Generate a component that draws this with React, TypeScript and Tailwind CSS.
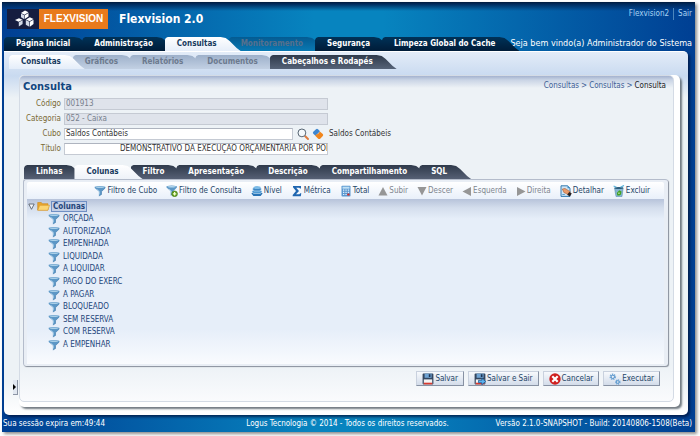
import React from 'react';
import clsx from 'clsx';

type Tab = { label: string; active?: boolean; disabled?: boolean };
type IconProps = { className?: string };

const MAIN_TABS: Tab[] = [
  { label: 'Página Inicial' },
  { label: 'Administração' },
  { label: 'Consultas', active: true },
  { label: 'Monitoramento', disabled: true },
  { label: 'Segurança' },
  { label: 'Limpeza Global do Cache' },
];

const SUB_TABS: Tab[] = [
  { label: 'Consultas', active: true },
  { label: 'Gráficos', disabled: true },
  { label: 'Relatórios', disabled: true },
  { label: 'Documentos', disabled: true },
  { label: 'Cabeçalhos e Rodapés' },
];

const QUERY_TABS: Tab[] = [
  { label: 'Linhas' },
  { label: 'Colunas', active: true },
  { label: 'Filtro' },
  { label: 'Apresentação' },
  { label: 'Descrição' },
  { label: 'Compartilhamento' },
  { label: 'SQL' },
];

const COLUMNS = [
  'ORÇADA',
  'AUTORIZADA',
  'EMPENHADA',
  'LIQUIDADA',
  'A LIQUIDAR',
  'PAGO DO EXERC',
  'A PAGAR',
  'BLOQUEADO',
  'SEM RESERVA',
  'COM RESERVA',
  'A EMPENHAR',
];

/* ---------- Icons ---------- */

function LogoIcon() {
  return (
    <svg viewBox="0 0 32 20" className="h-5 w-8">
      <g fill="#ffffff">
        <path d="M14 4l4-2.500 3.500 1.800-4 2.500z" />
        <path d="M14 4.500l3.300 1.700v4L14 8.300z" fill="#d5dbe8" />
        <path d="M17.800 6.200l3.700-2.300v3.500l-3.700 2.500z" />
        <path d="M8 11l4-1.800 3.600 1.600-4 2z" />
        <path d="M11.800 13.300l3.800-2v3.600l-3.800 2.600z" fill="#d5dbe8" />
        <path d="M19 10.500l3.800-2.200 3.700 1.700-3.900 2.200z" />
        <path d="M18.800 11l3.500 1.700v5l-3.500-2z" fill="#d5dbe8" />
        <path d="M22.900 12.700l3.600-2v4.200l-3.600 2.800z" />
      </g>
    </svg>
  );
}

function FunnelIcon({ className = 'h-3 w-3' }: IconProps) {
  return (
    <svg viewBox="0 0 12 12" className={className}>
      <path d="M.7 1.800Q6 0 11.300 1.800v1.100L7.500 6.600v2.900L4.900 11V6.600L.7 2.900z" fill="#5c97c6" />
      <ellipse cx="6" cy="2.200" rx="4.300" ry=".8" fill="#a9cfe8" />
      <path d="M3.300 4.200l2.200 2.200v3" fill="none" stroke="#a5cce7" strokeWidth=".8" />
      <path d="M11.300 2.900L7.500 6.600v2.900L4.900 11" fill="none" stroke="#3e78ab" strokeWidth=".6" />
    </svg>
  );
}

function FunnelAddIcon() {
  return (
    <svg viewBox="0 0 12 12" className="h-3 w-3">
      <path d="M.5 1.300Q5.600-.5 10.900 1.300v1.300L7.200 6.300v3L4.700 10.800V6.300L.5 2.600z" fill="#5c97c6" />
      <ellipse cx="5.700" cy="1.700" rx="4.300" ry=".8" fill="#b5d8ee" />
      <path d="M3 3.900l2.200 2.200v3" fill="none" stroke="#b5d8ee" strokeWidth=".8" />
      <circle cx="8.600" cy="8.800" r="2.900" fill="#5f9c18" stroke="#3e7010" strokeWidth=".5" />
      <path d="M8.600 7.100v3.400M6.900 8.800h3.400" stroke="#f4ffd0" strokeWidth="1.200" />
    </svg>
  );
}

function LevelIcon() {
  return (
    <svg viewBox="0 0 12 12" className="h-3 w-3">
      <path d="M.4 8.500l2-1.500h7.200l2 1.500-2 2.500H2.400z" fill="#2873b5" />
      <path d="M.8 6.500L2.600 5h6.800l1.800 1.500-1.800 2H2.600z" fill="#4f9ad4" stroke="#e7f3fb" strokeWidth=".5" />
      <path d="M1.400 4L3 2.500h6L10.600 4 9 6H3z" fill="#3b86c4" stroke="#e7f3fb" strokeWidth=".5" />
      <ellipse cx="6" cy="2.600" rx="3.600" ry="1.500" fill="#7dbbe6" />
    </svg>
  );
}

function SigmaIcon() {
  return (
    <svg viewBox="0 0 12 12" className="h-3 w-3">
      <path d="M2 1h8v2.500H9L8.200 2.700H5.200L8 6 5 9.300h3.400L9.300 8.300h1L9.800 11.200H1.700v-1.200L5 6 2 2.200z" fill="#1f66b0" />
    </svg>
  );
}

function CalculatorIcon() {
  return (
    <svg viewBox="0 0 12 12" className="h-3 w-3">
      <rect x="1.500" y=".8" width="9" height="10.700" rx=".8" fill="#5b98d0" />
      <rect x="2.500" y="1.700" width="7" height="2" fill="#bfe0f5" />
      <path d="M3 5.200h1.300M5.400 5.200h1.300M7.800 5.200h1.300M3 7.300h1.300M5.400 7.300h1.300M7.800 7.300h1.300M3 9.500h1.300M5.400 9.500h1.300" stroke="#e3f1fb" strokeWidth="1.200" />
      <rect x="7.300" y="8.600" width="2.200" height="1.900" fill="#e1261c" />
    </svg>
  );
}

function Arrow({ d }: { d: string }) {
  return (
    <svg viewBox="0 0 10 12" className="h-3 w-[10px]">
      <path d={d} fill="#969696" />
    </svg>
  );
}

function DetailIcon() {
  return (
    <svg viewBox="0 0 12 12" className="h-3 w-3">
      <path d="M1 .8h6.500L10 3.200v8.200H1z" fill="#cfe6f6" stroke="#1f6ea8" strokeWidth=".9" />
      <path d="M7.500.8v2.400H10z" fill="#3a8ac4" />
      <path d="M2.300 9.500h2.500" stroke="#3a8ac4" strokeWidth=".8" />
      <path d="M2.300 4l2.700-.6 5.300 3.400-1.900 2.800-4.500-2.100z" fill="#e89a6a" stroke="#a24c1f" strokeWidth=".5" />
      <path d="M9.200 7l2.600 1.500-2 3-2.600-1.700z" fill="#2a211f" />
    </svg>
  );
}

function TrashIcon() {
  return (
    <svg viewBox="0 0 12 12" className="h-3 w-3">
      <path d="M1.500 3h8.700L9 11.500H3z" fill="#86b5d2" stroke="#4b86ab" strokeWidth=".5" />
      <ellipse cx="5.900" cy="3" rx="4.400" ry="1" fill="#2c5d7c" />
      <path d="M.6 1l2.900 1.200M7.500 2.200l3.500-1.800" stroke="#5bb4dc" strokeWidth="1.200" />
      <path d="M6.200 5.200l2.300 1.300-.5 3-1.600 1H4.300L3.800 8z" fill="#43a321" />
      <path d="M5.700 7.300l1 .4-.3 1.300H5.300z" fill="#d8efd0" />
    </svg>
  );
}

function SearchIcon() {
  return (
    <svg viewBox="0 0 12 12" className="h-3 w-3">
      <path d="M8 8l3 3" stroke="#e07a3c" strokeWidth="1.900" strokeLinecap="round" />
      <circle cx="4.900" cy="4.900" r="3.900" fill="#f5f9fc" stroke="#566472" strokeWidth="1" />
    </svg>
  );
}

function EraserIcon() {
  return (
    <svg viewBox="0 0 12 12" className="h-3 w-3">
      <path d="M1.300 3.700L4 1.200q1-.8 2 0l2 2L3.500 7.800 1.300 5.800q-.9-1 0-2.100z" fill="#3f86cf" />
      <path d="M7.800 3.500L10.800 6q.9 1 0 2L8.200 10.700q-1 .8-2 0L3.200 7.800q.3-1.300 2-1.600t2.600-2.700z" fill="#f0851c" />
    </svg>
  );
}

function FolderIcon() {
  return (
    <svg viewBox="0 0 13 10" className="h-[10px] w-[13px]">
      <path d="M.7 9V1.500h3.600l1 1.200H11V9z" fill="#e8a52e" stroke="#c9841a" strokeWidth=".6" />
      <path d="M.7 9.300l2-5h9.800l-1.700 5z" fill="#fbd675" stroke="#d9982a" strokeWidth=".6" />
    </svg>
  );
}

function SaveIcon({ exit }: { exit?: boolean }) {
  return (
    <svg viewBox="0 0 12 12" className="h-3 w-3">
      <rect x=".6" y=".6" width="10.800" height="10.800" rx=".8" fill="#34465f" />
      <rect x="2.600" y=".6" width="7" height="4.200" fill="#6fa3d3" />
      <rect x="6.800" y="1.200" width="1.700" height="2.800" fill="#1e3554" />
      <rect x="1.800" y="6.400" width="8.400" height="5" fill="#f4f4f4" />
      <rect x="1.800" y="9.700" width="8.400" height="1.700" fill="#d93a30" />
      {exit && <path d="M4.500 7.300h3.300V5.300L11.700 8.500 7.800 11.700V9.700H4.500z" fill="#5db2ee" stroke="#12508e" strokeWidth=".7" />}
    </svg>
  );
}

function CancelIcon() {
  return (
    <svg viewBox="0 0 12 12" className="h-3 w-3">
      <circle cx="6" cy="6" r="5.700" fill="#cf1f1f" />
      <path d="M3.300 3.300l5.400 5.400M8.700 3.300L3.300 8.700" stroke="#ffffff" strokeWidth="2.200" />
    </svg>
  );
}

function GearsIcon() {
  return (
    <svg viewBox="0 0 12 12" className="h-3 w-3">
      <circle cx="3.800" cy="3.800" r="2.300" fill="none" stroke="#74a9d8" strokeWidth="2" strokeDasharray="1.100 .7" />
      <circle cx="3.800" cy="3.800" r="1.700" fill="none" stroke="#5f98cc" strokeWidth="1" />
      <circle cx="8.800" cy="9" r="1.900" fill="none" stroke="#74a9d8" strokeWidth="1.800" strokeDasharray="1 .6" />
      <circle cx="8.800" cy="9" r="1.400" fill="none" stroke="#5f98cc" strokeWidth=".9" />
    </svg>
  );
}

/* ---------- Building blocks ---------- */

type TabBarProps = { tabs: Tab[]; label: string; normal: string; active: string; disabled?: string };

function TabBar({ tabs, label, normal, active, disabled }: TabBarProps) {
  return (
    <nav aria-label={label} className="flex">
      {tabs.map((tab) => (
        <button
          key={tab.label}
          disabled={tab.disabled}
          className={clsx(
            'relative -mr-3 h-[14px] whitespace-nowrap pl-3 pr-6 text-[8px] font-bold leading-[14px]',
            '[clip-path:polygon(0_3px,1px_1px,3px_0,calc(100%-20px)_0,calc(100%-15px)_1px,calc(100%-11px)_4px,calc(100%-4px)_11px,100%_14px,0_14px)]',
            tab.active ? ['z-10', active] : tab.disabled ? disabled : normal
          )}
        >
          {tab.label}
        </button>
      ))}
    </nav>
  );
}

type FieldProps = {
  id: string;
  label: string;
  value: string;
  disabled?: boolean;
  inputClass: string;
  children?: React.ReactNode;
};

function Field({ id, label, value, disabled, inputClass, children }: FieldProps) {
  return (
    <div className="flex h-[15px] items-center">
      <label htmlFor={id} className="w-[38px] text-right text-[#7a6a35]">
        {label}
      </label>
      <input
        id={id}
        defaultValue={value}
        disabled={disabled}
        className={clsx(
          'ml-[3px] h-3 border border-[#c5cad3] pr-0 leading-[10px]',
          disabled ? 'bg-[#dfe3eb] text-[#77808d]' : 'border-t-[#aeb4bf] bg-white text-[#333333]',
          inputClass
        )}
      />
      {children}
    </div>
  );
}

function ToolButton({ icon, label, disabled }: { icon: React.ReactNode; label: string; disabled?: boolean }) {
  return (
    <button disabled={disabled} className={clsx('flex items-center gap-px', disabled ? 'text-[#7f868f]' : 'text-[#1f4567]')}>
      {icon}
      {label}
    </button>
  );
}

function ActionButton({ icon, label }: { icon: React.ReactNode; label: string }) {
  return (
    <button className="flex h-[15px] items-center gap-px border border-[#c9d1de] border-b-[#8791a3] border-r-[#8791a3] bg-gradient-to-b from-[#f7f9fc] to-[#d3dcea] px-[5px] text-[#1f4567]">
      {icon}
      {label}
    </button>
  );
}

export default function App() {
  return (
    <div className="bg-white pb-[5px] pl-[2px] pr-[5px] pt-[2px] font-['DejaVu_Sans_Condensed','DejaVu_Sans',sans-serif] text-[8px] leading-3">
      <div className="bg-[linear-gradient(to_right,#003f93,#0784bf_45%,#0784bf_55%,#003f93)] shadow-[2px_2px_3px_rgba(0,0,0,0.45)]">
        {/* Header */}
        <header className="flex h-[49px] justify-between bg-[linear-gradient(to_bottom,#001a3d,#002a5c_2px,transparent_9px)]">
          <div className="flex flex-col justify-between pl-[2px] pt-[7px]">
            <div className="flex items-center">
              <div className="ml-[3px] flex h-5 items-center bg-[#161d3f]">
                <LogoIcon />
                <span className="flex h-5 w-[69px] items-center justify-center bg-[#e87a1b] font-['Liberation_Sans',sans-serif] text-[10px] font-bold text-white">
                  FLEXVISION
                </span>
              </div>
              <h1 className="ml-[11px] text-[12px] font-bold text-white">Flexvision 2.0</h1>
            </div>
            <TabBar
              tabs={MAIN_TABS}
              label="Principal"
              normal="bg-gradient-to-b from-[#003258] to-[#001c38] text-white"
              active="bg-gradient-to-b from-white to-[#e6eef9] text-[#173a5e]"
              disabled="bg-gradient-to-b from-[#045b92] to-[#0a79b2] text-[#56708c]"
            />
          </div>
          <div className="flex flex-col items-end justify-between pb-[2px] pr-[3px] pt-[6px]">
            <div className="flex text-[#a9d3f2]">
              <a href="#perfil" className="pr-1">Flexvision2</a>
              <a href="#sair" className="border-l border-[#4b86bd] pl-1">Sair</a>
            </div>
            <p className="text-[9px] text-white">Seja bem vindo(a) Administrador do Sistema</p>
          </div>
        </header>

        {/* Page body */}
        <main className="ml-[2px] mr-[7px] rounded-b-[5px] rounded-tr-[5px] border-t border-white bg-[linear-gradient(to_bottom,#e3ecf8,#c9daf0_24px,#edf2f6_46px,#edf2f6_330px,#ffffff)] pb-[8px] pr-[8px] shadow-[2px_2px_3px_rgba(0,20,60,0.8)]">
          <div className="pb-[6px] pl-[5px] pt-[3px]">
            <TabBar
              tabs={SUB_TABS}
              label="Consultas"
              normal="bg-gradient-to-b from-[#2f3a4b] to-[#566378] text-white"
              active="bg-gradient-to-b from-white to-[#e4edf9] text-[#173a5e]"
              disabled="bg-gradient-to-b from-[#9db0ca] to-[#c2d0e3] text-[#6c7a8e]"
            />
          </div>

          <div className="flex">
            <div className="flex w-[15px] flex-col items-end justify-end pb-3">
              <button
                aria-label="Expandir painel"
                className="mr-px flex h-[15px] w-[5px] items-center border-b border-r border-[#8c95a5] bg-[#e1e7f0]"
              >
                <svg viewBox="0 0 3 6" className="h-[6px] w-[3px]">
                  <path d="M0 0l3 3-3 3z" fill="#000000" />
                </svg>
              </button>
            </div>

            <div className="min-w-0 flex-1 rounded-[5px] bg-white pb-[5px] pr-[6px] shadow-[2px_2px_2px_rgba(70,80,90,0.75)]">
              <section className="rounded-[5px] border border-[#d4dbe5] bg-[linear-gradient(to_bottom,#a4b2cf,#c9d4e5_4px,#edf2f6_12px,#edf2f6_290px,#fafbfd)] pb-[15px] pl-[3px] pr-[5px] pt-1">
                <div className="flex h-[15px] items-start justify-between">
                  <h2 className="pt-px text-[11px] font-bold text-[#12467f]">Consulta</h2>
                  <nav aria-label="Trilha" className="flex gap-[2px] pr-[2px] text-[#3d5f96]">
                    <a href="#consultas">Consultas</a>
                    <span>&gt;</span>
                    <a href="#consultas">Consultas</a>
                    <span>&gt;</span>
                    <span className="text-[#222222]">Consulta</span>
                  </nav>
                </div>

                <form className="pt-px">
                  <Field id="codigo" label="Código" value="001913" disabled inputClass="w-[264px] pl-px" />
                  <Field id="categoria" label="Categoria" value="052 - Caixa" disabled inputClass="w-[264px] pl-px" />
                  <Field id="cubo" label="Cubo" value="Saldos Contábeis" inputClass="w-[229px] pl-px">
                    <button type="button" aria-label="Pesquisar cubo" className="ml-1">
                      <SearchIcon />
                    </button>
                    <button type="button" aria-label="Limpar cubo" className="ml-[3px]">
                      <EraserIcon />
                    </button>
                    <span className="ml-[5px] text-[#333333]">Saldos Contábeis</span>
                  </Field>
                  <Field
                    id="titulo"
                    label="Título"
                    value="DEMONSTRATIVO DA EXECUÇÃO ORÇAMENTÁRIA POR PODER"
                    inputClass="w-[264px] pl-[55px]"
                  />
                </form>

                <div className="pl-px pt-[9px]">
                  <TabBar
                    tabs={QUERY_TABS}
                    label="Detalhes da consulta"
                    normal="bg-gradient-to-b from-[#2f3a4b] to-[#566075] text-white"
                    active="bg-gradient-to-b from-white to-[#eef2f8] text-[#173a5e]"
                  />
                </div>

                <div className="rounded-[3px] border-l border-t border-[#b4bccb] bg-[#e9eef5] pb-[2px] pl-[3px] pr-[4px] pt-[2px] shadow-[1px_1px_1px_rgba(110,118,132,0.8)]">
                  <div className="flex h-[17px] items-center justify-end gap-[9px] rounded-t-[2px] bg-gradient-to-b from-white to-[#e9f0fa] pr-[14px]">
                    <ToolButton icon={<FunnelIcon />} label="Filtro de Cubo" />
                    <ToolButton icon={<FunnelAddIcon />} label="Filtro de Consulta" />
                    <ToolButton icon={<LevelIcon />} label="Nível" />
                    <ToolButton icon={<SigmaIcon />} label="Métrica" />
                    <ToolButton icon={<CalculatorIcon />} label="Total" />
                    <ToolButton icon={<Arrow d="M5 2l4.500 8.500h-9z" />} label="Subir" disabled />
                    <ToolButton icon={<Arrow d="M5 10.500L.5 2h9z" />} label="Descer" disabled />
                    <ToolButton icon={<Arrow d="M.5 6.500L9 2v9z" />} label="Esquerda" disabled />
                    <ToolButton icon={<Arrow d="M9.500 6.500L1 2v9z" />} label="Direita" disabled />
                    <ToolButton icon={<DetailIcon />} label="Detalhar" />
                    <ToolButton icon={<TrashIcon />} label="Excluir" />
                  </div>

                  <div className="bg-[linear-gradient(to_bottom,#b7c3da,#d4deed_9px,#e6eef9_20px,#e6eef9_130px,#f9fbfe)] pb-[13px] text-[#23457a]">
                    <div className="flex h-[14px] items-center pl-px">
                      <svg viewBox="0 0 7 7" className="h-[7px] w-[7px]">
                        <path d="M.8 1h5.400L3.500 6.300z" fill="#f5f7fb" stroke="#4c5663" strokeWidth=".8" />
                      </svg>
                      <span className="ml-[2px]">
                        <FolderIcon />
                      </span>
                      <button className="ml-px h-[11px] border border-[#6f8fc4] bg-[#c3d0e6] px-px text-[8px] font-bold leading-[9px]">
                        Colunas
                      </button>
                    </div>
                    <ul className="grid h-[138px] auto-rows-fr">
                      {COLUMNS.map((name) => (
                        <li key={name} className="flex items-center gap-[3px] pl-[21px]">
                          <FunnelIcon />
                          {name}
                        </li>
                      ))}
                    </ul>
                  </div>
                </div>

                <div className="flex justify-end gap-1 pr-2 pt-[5px]">
                  <ActionButton icon={<SaveIcon />} label="Salvar" />
                  <ActionButton icon={<SaveIcon exit />} label="Salvar e Sair" />
                  <ActionButton icon={<CancelIcon />} label="Cancelar" />
                  <ActionButton icon={<GearsIcon />} label="Executar" />
                </div>
              </section>
            </div>
          </div>
        </main>

        {/* Footer */}
        <footer className="grid h-[17px] grid-cols-[1fr_auto_1fr] items-center pl-px pr-[3px] text-white">
          <span>Sua sessão expira em:49:44</span>
          <span>Logus Tecnologia © 2014 - Todos os direitos reservados.</span>
          <span className="text-right">Versão 2.1.0-SNAPSHOT - Build: 20140806-1508(Beta)</span>
        </footer>
      </div>
    </div>
  );
}
